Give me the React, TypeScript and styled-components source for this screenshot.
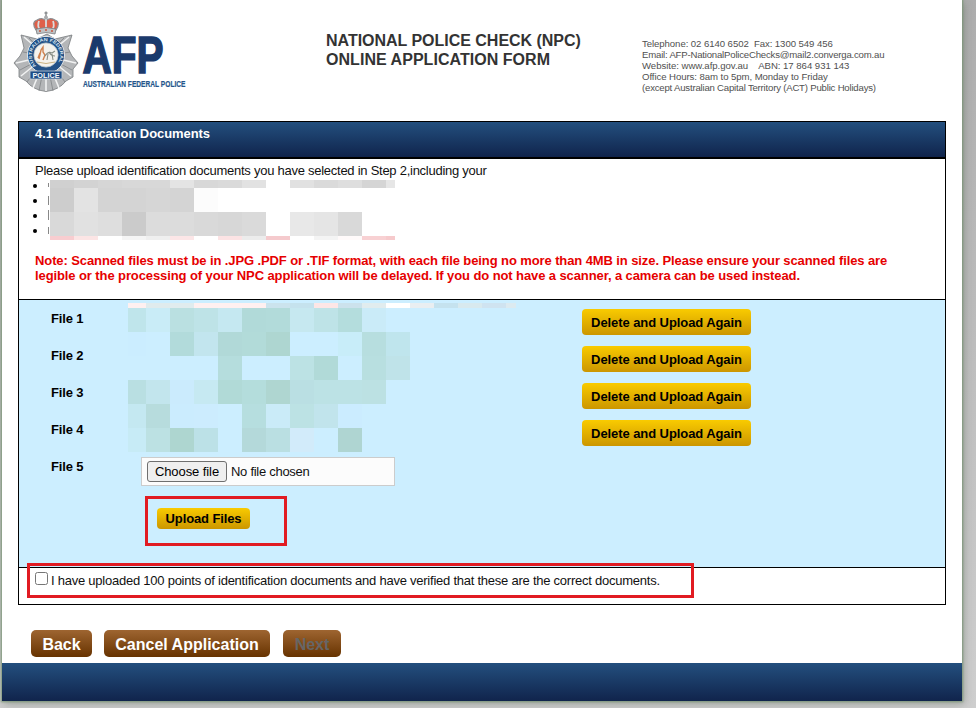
import React from 'react';
import styled, { createGlobalStyle, css } from 'styled-components';

const GlobalStyle = createGlobalStyle`
  * { box-sizing: border-box; }
  html, body { margin: 0; height: 708px; overflow: hidden; }
  body {
    background: linear-gradient(#adadad, #cecece);
    font: 13px/15px "Liberation Sans", Arial, sans-serif;
    color: #111;
  }
`;

const Sheet = styled.div`
  display: flex;
  flex-direction: column;
  width: 960px;
  height: 701px;
  margin-left: 2px;
  background: #fff;
  box-shadow: 0 0 2px 1px #7d9879, 2px 3px 8px rgba(70, 80, 70, 0.35);
`;

const Header = styled.header`
  display: grid;
  grid-template-columns: 324px 316px 1fr;
  height: 121px;
`;

const LogoCell = styled.div`
  padding: 8px 0 0 10px;
  svg { display: block; }
`;

const Title = styled.h1`
  margin: 31px 0 0;
  font-size: 16px;
  line-height: 19px;
  letter-spacing: -0.04px;
  color: #333;
`;

const Contact = styled.div`
  padding-top: 38px;
  font-size: 9.6px;
  line-height: 11px;
  color: #505050;
`;

const Line = styled.div<{ $track?: number }>`
  white-space: pre;
  letter-spacing: ${(p) => p.$track ?? 0}px;
`;

const Panel = styled.main`
  width: 928px;
  height: 484px;
  margin-left: 16px;
  border: 1px solid #000;
`;

const PanelTitle = styled.h2`
  margin: 0;
  height: 37px;
  padding: 4px 16px 0;
  font-size: 13px;
  line-height: 15px;
  letter-spacing: -0.07px;
  color: #fff;
  background: linear-gradient(#234f7e, #10244c);
  border-bottom: 2px solid #000;
`;

const Intro = styled.section`
  height: 141px;
  padding: 4px 16px 0;
  border-bottom: 1px solid #000;
`;

const ListArea = styled.div`
  position: relative;
  height: 60px;
`;

const Bullets = styled.ul`
  margin: 0;
  padding: 0;
  list-style: none;
`;

const Bullet = styled.li<{ $mark: number }>`
  display: flex;
  align-items: center;
  gap: 11px;
  height: 15px;
  margin-left: -2px;
  padding-top: 1px;
  &::before {
    content: '';
    width: 4px;
    height: 4px;
    border-radius: 50%;
    background: #000;
  }
  &::after {
    content: '';
    width: 1px;
    height: ${(p) => p.$mark}px;
    margin-top: -2px;
    background: #888;
  }
`;

const Note = styled.p`
  margin: 15px 0 0;
  color: #e60000;
  font-weight: bold;
`;

const Mosaic = styled.div<{ $left: number; $top: number; $cols: string; $rows: string }>`
  position: absolute;
  left: ${(p) => p.$left}px;
  top: ${(p) => p.$top}px;
  display: grid;
  grid-template-columns: ${(p) => p.$cols};
  grid-template-rows: ${(p) => p.$rows};
  pointer-events: none;
`;

const Tile = styled.i<{ $tone: string }>`
  background: ${(p) => p.$tone};
`;

const Files = styled.section`
  position: relative;
  height: 268px;
  background: #cef;
  border-bottom: 1px solid #000;
`;

const FileRow = styled.div`
  display: grid;
  grid-template-columns: 90px 441px 1fr;
  height: 37px;
  padding-left: 32px;
  align-items: start;
`;

const FileLabel = styled.label`
  padding-top: 11px;
  font-weight: bold;
  letter-spacing: -0.15px;
  color: #000;
`;

const goldFill = css`
  border: 0;
  padding: 0;
  border-radius: 4px;
  background: linear-gradient(#f9cb00, #cc9600);
  color: #000;
  font: bold 13px/15px "Liberation Sans", Arial, sans-serif;
`;

const DeleteButton = styled.button`
  ${goldFill}
  width: 169px;
  height: 26px;
  margin-top: 9px;
  letter-spacing: -0.08px;
`;

const UploadButton = styled.button`
  ${goldFill}
  width: 93px;
  height: 21px;
  letter-spacing: -0.12px;
`;

const Picker = styled.div`
  display: flex;
  align-items: flex-start;
  gap: 4px;
  width: 254px;
  height: 29px;
  margin-top: 9px;
  padding: 3px 5px;
  background: #fcfcfc;
  border: 1px solid #ccc;
`;

const ChooseButton = styled.button`
  width: 80px;
  height: 21px;
  padding: 0;
  border: 1px solid #6f6f6f;
  border-radius: 3px;
  background: #efefef;
  color: #000;
  font: 13px/15px "Liberation Sans", Arial, sans-serif;
  letter-spacing: -0.08px;
`;

const PickerStatus = styled.span`
  padding-top: 3px;
  letter-spacing: -0.28px;
`;

const UploadFrame = styled.div`
  display: flex;
  width: 142px;
  height: 50px;
  margin: 11px 0 0 126px;
  padding: 9px;
  border: 3px solid #e11b22;
`;

const Confirm = styled.section`
  position: relative;
  display: flex;
  gap: 3px;
  padding: 4px 16px;
`;

const ConfirmFrame = styled.div`
  position: absolute;
  left: 8px;
  top: -5px;
  width: 667px;
  height: 35px;
  border: 3px solid #e11b22;
  pointer-events: none;
`;

const Check = styled.input`
  width: 13px;
  height: 13px;
  margin: 0;
`;

const ConfirmText = styled.label`
  padding-top: 1px;
  white-space: nowrap;
  letter-spacing: -0.24px;
`;

const Actions = styled.nav`
  display: flex;
  height: 58px;
  padding: 25px 29px 0;
`;

const ActionButton = styled.button<{ $width: number; $gap?: number }>`
  width: ${(p) => p.$width}px;
  height: 27px;
  margin-right: ${(p) => p.$gap ?? 0}px;
  padding: 2px 0 0;
  border: 0;
  border-radius: 5px;
  background: linear-gradient(#9e6531, #673300);
  color: #fff;
  font: bold 16px/18px "Liberation Sans", Arial, sans-serif;
  white-space: nowrap;
  &:disabled { color: #666; }
`;

const Footer = styled.footer`
  height: 38px;
  background: linear-gradient(#234f7e, #10244c);
`;

const introTiles = [
  '#d0d0d0 #d3d3d3 #d6d6d6 #d8d8d8 #d8d8d8 #e4e4e4 #d8d8d8 #dadada #e2e2e2 #fff #e1e1e1 #dadada #dedede #d5d5d5 #e6e6e6',
  '#cdcdcd #e3e3e3 #d4d4d4 #d4d4d4 #d6d6d6 #d4d4d4 #fcfcfc #fff #fff #fff #fff #fff #fff #fff #fff',
  '#d9d9d9 #e1e1e1 #dedede #cbcbcb #dcdcdc #dcdcdc #d9d9d9 #d7d7d7 #dadada #fff #e8e8e8 #e5e5e5 #d9d9d9 #fff #fff',
  '#f8cdd0 #fce5e5 #fff #f5f5f5 #efefef #fce6e7 #fff #fce3e4 #ececec #f5cacd #fff #f4f4f4 #fffafa #f8d1d3 #f6cacc',
];

const fileTiles = [
  '#fff0f0 #e0ebed #e0ecee #fff0f0 #fff0f0 #fff0f0 #cbe3ed #c5e2ed #fde6e6 #cce2ec #e1ecee #fff #e9eef1 #c5e2ee #d8e9ee #cfe3f0 #dceaf0',
  '#bfe5eb #c9ecf7 #bae0e1 #bee3e7 #c5e8f1 #b1dad9 #b2dbda #c6e8f0 #bee3e7 #b4dddd #caebf8 #cef',
  '#cbedff #cef #b2dbdb #c2e5ee #b1d9d8 #b2dbd9 #aed6d1 #cef #cef #c8edf9 #b7dedf #bfe5ed',
  '#cef #cef #cef #cef #b5dddd #cef #cef #bce2e4 #b1dad8 #cef #b8dfe0 #bfe3e9',
  '#b9dfe2 #c2e5ed #cbebfd #c6e9f2 #b1dad7 #b4dddc #afd6d1 #badfe3 #bce2e5 #bce2e5 #bce1e3 #cef',
  '#c4e8f1 #b7dcdd #cbecfe #ccecfe #cef #b6dedf #caebf8 #bce2e4 #c1e4ec #cbecff #cef #cef',
  '#c7ebf6 #bce1e3 #aed6d0 #bce1e7 #cef #b4d9da #badfe2 #d2ebfa #cef #afd5d2 #cef #cef',
];

const pad = (row: string, count: number) => {
  const tones = row.split(' ');
  return [...tones, ...Array(count - tones.length).fill('transparent')];
};

function Crest() {
  return (
    <g>
      <path
        d="M35 26 25 31 9 27 12 40 8 48 2 55 7 61 7 69 14 73Q21 82 34 83.5Q47 82 54 73L61 69 61 61 66 55 60 48 56 40 60 27 43 31Z"
        fill="#b4b6b8" stroke="#777b7e" strokeWidth=".8"
      />
      <path
        d="M34 48 12 29M34 48 4 55M34 48 9 68M34 48 21 80M34 48 34 83M34 48 47 80M34 48 59 68M34 48 64 55M34 48 57 29"
        stroke="#f1f2f2" strokeWidth="1.6"
      />
      <path
        d="M34 48 17 30M34 48 11 44M34 48 8 62M34 48 15 74M34 48 27 83M34 48 41 83M34 48 53 74M34 48 60 62M34 48 58 44M34 48 52 30"
        stroke="#808487" strokeWidth=".8"
      />
      <circle cx="34" cy="47" r="18.6" fill="#235187" stroke="#dfe4e8" strokeWidth="1" />
      <circle cx="34" cy="47" r="12.1" fill="#f4f2ed" stroke="#b8c4cc" strokeWidth=".8" />
      <path id="crest-ring" d="M24.4 57.8A14.2 14.2 0 1 1 43.6 57.8" fill="none" />
      <text fill="#dbe7f0" fontSize="4.6" fontWeight="bold" fontFamily="Liberation Sans, sans-serif">
        <textPath href="#crest-ring" textLength="63" lengthAdjust="spacingAndGlyphs">AUSTRALIAN FEDERAL</textPath>
      </text>
      <path d="M27 51 29 42 31 39 31 44 33 47 31 52M28 45 26 50" fill="none" stroke="#cf824f" strokeWidth="1.4" />
      <path d="M33 48Q36 43 40 45L43 43M36 46 35 52M40 46 41 52M37 44Q39 48 43 48" fill="none" stroke="#8a8f86" strokeWidth="1.1" />
      <path d="M25 54Q34 57 43 54" fill="none" stroke="#c9b284" strokeWidth="1" />
      <path d="M18 63H50V71H18Z" fill="#1d4c84" stroke="#c9d2da" strokeWidth=".8" />
      <text x="20.5" y="69.6" fill="#f4f7fa" fontSize="7" fontWeight="bold" fontFamily="Liberation Sans, sans-serif" textLength="27" lengthAdjust="spacingAndGlyphs">POLICE</text>
      <path d="M24 22Q19 14 25 12Q31 9 34 13Q37 9 43 12Q49 14 44 22Z" fill="#df6049" stroke="#8c8f92" strokeWidth="1.2" />
      <path d="M34 7V22M27 13Q25 18 28 22M41 13Q43 18 40 22" fill="none" stroke="#dadcdc" strokeWidth="1.8" />
      <path d="M32.5 5H35.5M34 3.5V9" stroke="#888b8d" strokeWidth="1.4" />
      <circle cx="34" cy="9.5" r="2" fill="#a8abad" />
      <path d="M24 21Q34 18 44 21L43 26Q34 23 25 26Z" fill="#bfc2c4" stroke="#777b7e" strokeWidth=".8" />
      <path d="M27 23H29M33 22H35M39 23H41" stroke="#c9553d" strokeWidth="1.3" />
    </g>
  );
}

function Logo() {
  return (
    <svg width="260" height="92" viewBox="0 0 260 92" role="img" aria-label="AFP Australian Federal Police">
      <Crest />
      <g fontFamily="Liberation Sans, sans-serif" fontWeight="bold">
        <text x="70.5" y="64.5" fontSize="51" textLength="81" lengthAdjust="spacingAndGlyphs" fill="#1b3a6c" stroke="#1b3a6c" strokeWidth="1.6">AFP</text>
        <text x="71" y="79" fontSize="9.6" textLength="102.5" lengthAdjust="spacingAndGlyphs" fill="#24558a" stroke="#24558a" strokeWidth=".2">AUSTRALIAN FEDERAL POLICE</text>
      </g>
    </svg>
  );
}

export default function App() {
  return (
    <>
      <GlobalStyle />
      <Sheet>
        <Header>
          <LogoCell><Logo /></LogoCell>
          <Title>
            <Line $track={-0.02}>NATIONAL POLICE CHECK (NPC)</Line>
            <Line $track={0.04}>ONLINE APPLICATION FORM</Line>
          </Title>
          <Contact>
            <Line $track={-0.07}>{'Telephone: 02 6140 6502  Fax: 1300 549 456'}</Line>
            <Line $track={-0.2}>Email: AFP-NationalPoliceChecks@mail2.converga.com.au</Line>
            <Line $track={-0.03}>{'Website: www.afp.gov.au    ABN: 17 864 931 143'}</Line>
            <Line $track={-0.07}>Office Hours: 8am to 5pm, Monday to Friday</Line>
            <Line $track={-0.2}>(except Australian Capital Territory (ACT) Public Holidays)</Line>
          </Contact>
        </Header>
        <Panel>
          <PanelTitle>4.1 Identification Documents</PanelTitle>
          <Intro>
            <Line $track={-0.26}>Please upload identification documents you have selected in Step 2,including your</Line>
            <ListArea>
              <Bullets>
                {[4, 9, 10, 7].map((mark, i) => <Bullet key={i} $mark={mark} />)}
              </Bullets>
              <Mosaic $left={15} $top={2} $cols="repeat(14, 24px) 9px" $rows="8px 24px 24px 4px">
                {introTiles.flatMap((row, r) => pad(row, 15).map((tone, c) => <Tile key={`${r}-${c}`} $tone={tone} />))}
              </Mosaic>
            </ListArea>
            <Note>
              <Line $track={-0.1}>Note: Scanned files must be in .JPG .PDF or .TIF format, with each file being no more than 4MB in size. Please ensure your scanned files are</Line>
              <Line $track={-0.098}>legible or the processing of your NPC application will be delayed. If you do not have a scanner, a camera can be used instead.</Line>
            </Note>
          </Intro>
          <Files>
            {[1, 2, 3, 4].map((n) => (
              <FileRow key={n}>
                <FileLabel>File {n}</FileLabel>
                <span />
                <DeleteButton>Delete and Upload Again</DeleteButton>
              </FileRow>
            ))}
            <FileRow>
              <FileLabel>File 5</FileLabel>
              <Picker>
                <ChooseButton>Choose file</ChooseButton>
                <PickerStatus>No file chosen</PickerStatus>
              </Picker>
            </FileRow>
            <UploadFrame><UploadButton>Upload Files</UploadButton></UploadFrame>
            <Mosaic $left={109} $top={3} $cols="18px repeat(15, 24px) 10px" $rows="5px repeat(6, 24px)">
              {fileTiles.flatMap((row, r) => pad(row, 17).map((tone, c) => <Tile key={`${r}-${c}`} $tone={tone} />))}
            </Mosaic>
          </Files>
          <Confirm>
            <Check type="checkbox" id="confirm" />
            <ConfirmText htmlFor="confirm">I have uploaded 100 points of identification documents and have verified that these are the correct documents.</ConfirmText>
            <ConfirmFrame />
          </Confirm>
        </Panel>
        <Actions>
          <ActionButton $width={61} $gap={12}>Back</ActionButton>
          <ActionButton $width={166} $gap={13}>Cancel Application</ActionButton>
          <ActionButton $width={58} disabled>Next</ActionButton>
        </Actions>
        <Footer />
      </Sheet>
    </>
  );
}
